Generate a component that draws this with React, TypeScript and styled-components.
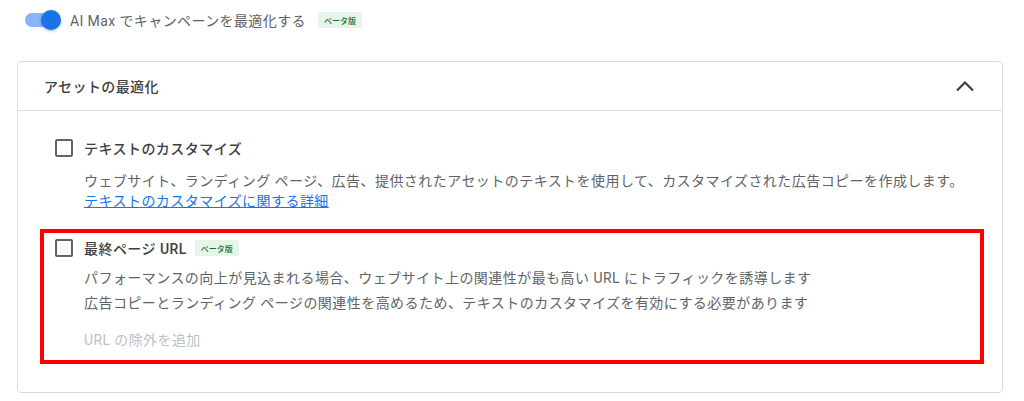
import styled, { createGlobalStyle } from "styled-components";

const GlobalStyle = createGlobalStyle`
    * {
        box-sizing: border-box;
    }
    body {
        margin: 0;
        background: #fff;
        font-family: Roboto, "Noto Sans CJK JP", sans-serif;
        color: #3c4043;
    }
`;

const Page = styled.div`
    width: 1024px;
    padding: 0 21px 0 17px;
`;

const ToggleRow = styled.div`
    height: 40px;
    display: flex;
    align-items: center;
    padding-left: 8px;
`;

const Switch = styled.div`
    position: relative;
    width: 36px;
    height: 20px;
    display: flex;
    align-items: center;
    &::before {
        content: "";
        width: 34px;
        height: 14px;
        border-radius: 7px;
        background: #8ab4f8;
    }
    &::after {
        content: "";
        position: absolute;
        right: 0;
        top: 0;
        width: 20px;
        height: 20px;
        border-radius: 50%;
        background: #1a73e8;
        box-shadow: 0 1px 3px rgba(0, 0, 0, 0.3);
    }
`;

const ToggleLabel = styled.span`
    margin-left: 9px;
    font-size: 14px;
    letter-spacing: 0.4px;
    color: #5f6368;
`;

const Badge = styled.span<{ gap: number }>`
    margin-left: ${(p) => p.gap}px;
    height: 16px;
    padding: 0 6px;
    display: inline-flex;
    align-items: center;
    border-radius: 2px;
    background: #e6f4ea;
    color: #137333;
    font-size: 8px;
    font-weight: 500;
`;

const Card = styled.section`
    margin-top: 21px;
    border: 1px solid #dadce0;
    border-radius: 4px;
`;

const CardHeader = styled.div`
    height: 49px;
    padding: 0 28px 0 26px;
    display: flex;
    align-items: center;
    justify-content: space-between;
    border-bottom: 1px solid #dadce0;
    font-size: 14px;
    font-weight: 500;
    letter-spacing: 0.4px;
    color: #3c4043;
`;

const CardBody = styled.div`
    padding: 18px 18px 28px 22px;
    display: flex;
    flex-direction: column;
    gap: 4px;
`;

const Option = styled.div<{ highlight?: boolean }>`
    border: 4px solid ${(p) => (p.highlight ? "#ff0000" : "transparent")};
    padding: 6px 12px 10px 11px;
`;

const TitleRow = styled.div`
    display: flex;
    align-items: center;
    height: 18px;
`;

const Checkbox = styled.span`
    width: 18px;
    height: 18px;
    border: 2px solid #5f6368;
    border-radius: 2px;
    flex-shrink: 0;
`;

const Title = styled.span`
    margin-left: 11px;
    font-size: 14px;
    font-weight: 500;
    letter-spacing: 0.45px;
    color: #3c4043;
`;

const Texts = styled.div<{ top: number }>`
    margin-top: ${(p) => p.top}px;
    padding-left: 29px;
    display: flex;
    flex-direction: column;
    gap: 5px;
`;

const Desc = styled.p`
    margin: 0;
    font-size: 14px;
    line-height: 20px;
    letter-spacing: 0.45px;
    color: #5f6368;
`;

const MoreLink = styled.a`
    display: block;
    color: #1a73e8;
    text-decoration: underline;
`;

const AddExclusion = styled.div`
    margin-top: 17px;
    padding-left: 29px;
    font-size: 14px;
    line-height: 20px;
    letter-spacing: 0.4px;
    color: #bdc1c6;
`;

function App() {
    return (
        <>
            <GlobalStyle />
            <Page>
                <ToggleRow>
                    <Switch />
                    <ToggleLabel>AI Max でキャンペーンを最適化する</ToggleLabel>
                    <Badge gap={12}>ベータ版</Badge>
                </ToggleRow>
                <Card>
                    <CardHeader>
                        アセットの最適化
                        <svg width="18" height="12" viewBox="0 0 18 12">
                            <polyline points="1,10.5 9,2.5 17,10.5" fill="none" stroke="#3c4043" strokeWidth="2.2" />
                        </svg>
                    </CardHeader>
                    <CardBody>
                        <Option>
                            <TitleRow>
                                <Checkbox />
                                <Title>テキストのカスタマイズ</Title>
                            </TitleRow>
                            <Texts top={14}>
                                <Desc>
                                    ウェブサイト、ランディング ページ、広告、提供されたアセットのテキストを使用して、カスタマイズされた広告コピーを作成します。
                                    <MoreLink>テキストのカスタマイズに関する詳細</MoreLink>
                                </Desc>
                            </Texts>
                        </Option>
                        <Option highlight>
                            <TitleRow>
                                <Checkbox />
                                <Title>最終ページ URL</Title>
                                <Badge gap={8}>ベータ版</Badge>
                            </TitleRow>
                            <Texts top={11}>
                                <Desc>パフォーマンスの向上が見込まれる場合、ウェブサイト上の関連性が最も高い URL にトラフィックを誘導します</Desc>
                                <Desc>広告コピーとランディング ページの関連性を高めるため、テキストのカスタマイズを有効にする必要があります</Desc>
                            </Texts>
                            <AddExclusion>URL の除外を追加</AddExclusion>
                        </Option>
                    </CardBody>
                </Card>
            </Page>
        </>
    );
}

export default App;
